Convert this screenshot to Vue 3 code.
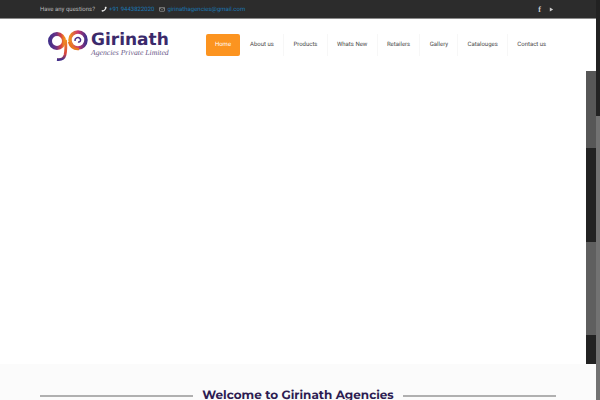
<script setup>
const nav = ['Home', 'About us', 'Products', 'Whats New', 'Retailers', 'Gallery', 'Catalouges', 'Contact us']
</script>

<template>
  <div class="page">
    <header class="topbar">
      <div class="top-left">
        <span class="q">Have any questions?</span>
        <svg class="ic phone" viewBox="0 0 8 8" width="6" height="6"><path d="M6.500 .6 7.600 1.800C7.400 4.600 4.400 7.400 1.600 7.600L.5 6.400 2 5.200l.8.6C4 5.200 5 4 5.400 3L4.900 2.100z" fill="#eee"/></svg>
        <a class="link">+91 9443822020</a>
        <svg class="ic mail" viewBox="0 0 8 7" width="6" height="5"><rect x=".5" y=".5" width="7" height="5.500" rx=".8" fill="none" stroke="#bbb" stroke-width=".8"/><path d="M.8 1.400 4 3.600l3.200-2.200" fill="none" stroke="#bbb" stroke-width=".6"/></svg>
        <a class="link">girinathagencies@gmail.com</a>
      </div>
      <div class="social">
        <span class="fb">f</span>
        <svg viewBox="0 0 6 6" width="5" height="5"><path d="M1 .5 5 3 1 5.500z" fill="#ccc"/></svg>
      </div>
    </header>

    <div class="navbar">
      <div class="logo">
        <svg class="mark" viewBox="0 0 42 34" width="42" height="34">
          <defs>
            <linearGradient id="g1" x1="0" y1="0" x2="1" y2="0"><stop offset="0" stop-color="#43308a"/><stop offset=".45" stop-color="#6d3185"/><stop offset=".8" stop-color="#d8433f"/><stop offset="1" stop-color="#f08a1d"/></linearGradient>
            <linearGradient id="g2" x1="0" y1="0" x2="1" y2="0"><stop offset="0" stop-color="#f0901f"/><stop offset=".5" stop-color="#c9356b"/><stop offset="1" stop-color="#43308a"/></linearGradient>
            <linearGradient id="g3" x1="0" y1="0" x2="0" y2="1"><stop offset="0" stop-color="#f0901f"/><stop offset=".7" stop-color="#d8433f"/><stop offset="1" stop-color="#43308a"/></linearGradient>
          </defs>
          <circle cx="10" cy="12" r="7" fill="none" stroke="url(#g1)" stroke-width="4"/>
          <path d="M18.500 11c.6 6 .4 11-.5 15-.9 3.500-4 5-8 4.500" fill="none" stroke="url(#g3)" stroke-width="2.800"/>
          <circle cx="31" cy="11" r="8" fill="none" stroke="url(#g2)" stroke-width="3.500"/>
          <path d="M22 13c1.500 5 5 7.500 10 7" fill="none" stroke="#e8761f" stroke-width="2.500"/>
          <path d="M28 12c-.5-3 3-4.500 5-2.500 1.500 2 0 4-2 3.500" fill="none" stroke="#4a2f86" stroke-width="1.500"/>
        </svg>
        <div class="wordmark">
          <div class="name">Girinath</div>
          <div class="sub">Agencies Private Limited</div>
        </div>
      </div>
      <nav class="menu">
        <a v-for="(n, i) in nav" :key="n" class="item" :class="{ active: i === 0 }">{{ n }}</a>
      </nav>
    </div>

    <main class="hero"></main>

    <section class="welcome">
      <div class="heading">
        <span class="rule"></span>
        <h2>Welcome to Girinath Agencies</h2>
        <span class="rule"></span>
      </div>
    </section>

    <div class="strip">
      <div class="panel a"></div>
      <div class="panel b"></div>
      <div class="panel a c"></div>
      <div class="panel b d"></div>
    </div>
    <div class="edge"></div>
  </div>
</template>

<style>
html, body { margin: 0; overflow: hidden; }
</style>

<style scoped>
.page {
  position: relative;
  width: 600px;
  height: 400px;
  overflow: hidden;
  background: #fff;
  font-family: Roboto, "Liberation Sans", sans-serif;
  text-rendering: geometricPrecision;
  display: flex;
  flex-direction: column;
}
.topbar {
  box-sizing: border-box;
  height: 19px;
  flex: none;
  background: #2c2c2c;
  border-bottom: 1px solid #8a8a8a;
  display: flex;
  justify-content: space-between;
  align-items: center;
  padding: 0 46px 0 40px;
  font-size: 6px;
}
.top-left { display: flex; align-items: center; }
.q { color: #b8b8b8; }
.ic { flex: none; }
.phone { margin: 0 2px 0 6px; }
.mail { margin: 0 2px 0 5px; }
.link { color: #1a78b4; }
.social { display: flex; align-items: center; gap: 8px; }
.fb { color: #ccc; font: bold 8px "Liberation Serif", serif; }
.navbar {
  box-sizing: border-box;
  height: 70px;
  flex: none;
  display: flex;
  padding: 0 0 0 47px;
}
.logo { width: 159px; flex: none; display: flex; align-items: flex-start; padding-top: 10px; box-sizing: border-box; }
.mark { flex: none; }
.wordmark { margin: 2px 0 0 2px; }
.name {
  font-family: "DejaVu Sans", sans-serif;
  font-weight: 700;
  font-size: 17px;
  line-height: 18px;
  color: #3b2a6b;
  white-space: nowrap;
}
.sub {
  font-family: "Liberation Serif", serif;
  font-style: italic;
  font-size: 7.700px;
  line-height: 8px;
  color: #6a5a88;
  white-space: nowrap;
}
.menu { display: flex; align-items: flex-start; padding-top: 15px; }
.item {
  box-sizing: border-box;
  height: 22px;
  line-height: 22px;
  padding: 0 9.250px;
  font-size: 6px;
  color: #4a4a4a;
  border-right: 1px solid #f7f7f7;
  white-space: nowrap;
}
.item:last-child { border-right: 0; }
.item:nth-child(2) { padding-left: 10px; }
.active {
  width: 34px;
  padding: 0;
  text-align: center;
  background: #fc9420;
  color: #fff;
  border-radius: 2px;
  border-right: 0;
}
.hero { height: 275px; flex: none; background: #fff; }
.welcome { flex: 1; background: #fbfbfb; padding-top: 22px; }
.heading { display: flex; align-items: center; padding: 0 44px 0 40px; }
.rule { flex: 1; height: 2px; background: #b0b0b0; }
h2 {
  margin: 0 9px;
  font-family: Montserrat, Inter, "Liberation Sans", sans-serif;
  font-size: 12px;
  line-height: 20px;
  font-weight: 700;
  color: #2d1d52;
  white-space: nowrap;
}
.strip {
  position: absolute;
  top: 71px;
  left: 586px;
  width: 10px;
  display: flex;
  flex-direction: column;
}
.a { height: 77px; background: #575757; }
.b { height: 94px; background: #222; }
.c { height: 93px; background: #5f5f5f; }
.d { height: 29px; }
.edge {
  position: absolute;
  top: 0;
  right: 0;
  width: 4px;
  height: 400px;
  background: linear-gradient(#222 116px, #727272 116px);
}
</style>
